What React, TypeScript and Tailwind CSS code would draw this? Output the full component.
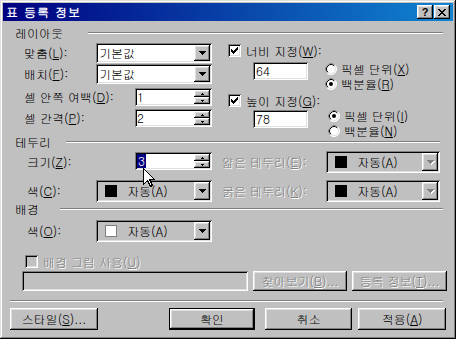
import React from "react";

const raised =
  "shadow-[inset_-1px_-1px_0_#000,inset_1px_1px_0_#fff,inset_-2px_-2px_0_#808080,inset_2px_2px_0_#dfdfdf]";
const defRaised =
  "shadow-[inset_0_0_0_1px_#000,inset_-2px_-2px_0_#000,inset_2px_2px_0_#fff,inset_-3px_-3px_0_#808080,inset_3px_3px_0_#dfdfdf]";
const sunken =
  "shadow-[inset_1px_1px_0_#808080,inset_-1px_-1px_0_#fff,inset_2px_2px_0_#000,inset_-2px_-2px_0_#dfdfdf]";
const dim = "text-[#808080] [text-shadow:1px_1px_0_#fff]";

function DropArrow({ disabled = false }: { disabled?: boolean }) {
  const rows = (c: string, o: number) => (
    <g fill={c}>
      <rect x={0 + o} y={0 + o} width={7} height={1} />
      <rect x={1 + o} y={1 + o} width={5} height={1} />
      <rect x={2 + o} y={2 + o} width={3} height={1} />
      <rect x={3 + o} y={3 + o} width={1} height={1} />
    </g>
  );
  return (
    <svg width="8" height="5" shapeRendering="crispEdges" className="ml-[1px]">
      {disabled && rows("#fff", 1)}
      {rows(disabled ? "#808080" : "#000", 0)}
    </svg>
  );
}

function Combo({ className, children, bg = "bg-white", disabled = false }: { className: string; children: React.ReactNode; bg?: string; disabled?: boolean }) {
  return (
    <div className={`flex p-[2px] ${bg} ${sunken} ${className}`}>
      <div className="flex-1 flex items-center">{children}</div>
      <div className={`w-[16px] bg-[#c0c0c0] flex items-center justify-center ${raised}`}>
        <DropArrow disabled={disabled} />
      </div>
    </div>
  );
}

function ColorCombo({ className, swatch = "black", disabled = false }: { className: string; swatch?: "black" | "white"; disabled?: boolean }) {
  return (
    <Combo className={className} bg="bg-[#c0c0c0]" disabled={disabled}>
      <span
        className={`ml-[7px] w-[12px] h-[12px] border ${swatch === "black" ? "bg-black border-black" : "bg-white border-[#808080]"}`}
      />
      <span className="ml-[10px]">자동(A)</span>
    </Combo>
  );
}

function TinyArrow({ up }: { up?: boolean }) {
  return (
    <svg width="3" height="2" shapeRendering="crispEdges">
      {up ? (
        <g fill="#000">
          <rect x="1" y="0" width="1" height="1" />
          <rect x="0" y="1" width="3" height="1" />
        </g>
      ) : (
        <g fill="#000">
          <rect x="0" y="0" width="3" height="1" />
          <rect x="1" y="1" width="1" height="1" />
        </g>
      )}
    </svg>
  );
}

function Spin({ className, children }: { className: string; children: React.ReactNode }) {
  return (
    <div className={`flex p-[2px] bg-white ${sunken} ${className}`}>
      <div className="flex-1 flex items-center">{children}</div>
      <div className="w-[16px] flex flex-col">
        <div className={`flex-1 bg-[#c0c0c0] flex items-center justify-center ${raised}`}>
          <TinyArrow up />
        </div>
        <div className={`flex-1 bg-[#c0c0c0] flex items-center justify-center ${raised}`}>
          <TinyArrow />
        </div>
      </div>
    </div>
  );
}

function Field({ className, children }: { className: string; children?: React.ReactNode }) {
  return <div className={`flex items-center pl-[3px] bg-white ${sunken} ${className}`}>{children}</div>;
}

function Check({ checked = false, disabled = false }: { checked?: boolean; disabled?: boolean }) {
  return (
    <div className={`w-[13px] h-[13px] shrink-0 relative ${disabled ? "bg-[#c0c0c0]" : "bg-white"} ${sunken}`}>
      {checked && (
        <svg width="7" height="7" shapeRendering="crispEdges" className="absolute left-[3px] top-[3px]">
          <g fill="#000">
            <rect x="0" y="2" width="1" height="3" />
            <rect x="1" y="3" width="1" height="3" />
            <rect x="2" y="4" width="1" height="3" />
            <rect x="3" y="3" width="1" height="3" />
            <rect x="4" y="2" width="1" height="3" />
            <rect x="5" y="1" width="1" height="3" />
            <rect x="6" y="0" width="1" height="3" />
          </g>
        </svg>
      )}
    </div>
  );
}

function Radio({ checked = false, children }: { checked?: boolean; children: React.ReactNode }) {
  return (
    <div className="h-[15px] flex items-center">
      <svg width="12" height="12" className="shrink-0">
        <circle cx="6" cy="6" r="5.5" fill="#fff" stroke="#fff" />
        <path d="M2.11 9.89 A5.5 5.5 0 0 1 9.89 2.11" fill="none" stroke="#808080" />
        <circle cx="6" cy="6" r="4.5" fill="none" stroke="#dfdfdf" />
        <path d="M2.82 9.18 A4.5 4.5 0 0 1 9.18 2.82" fill="none" stroke="#000" />
        {checked && <circle cx="6" cy="6" r="2" fill="#000" />}
      </svg>
      <span className="ml-[4px] whitespace-nowrap">{children}</span>
    </div>
  );
}

function Header({ label, lw, mr }: { label: string; lw: string; mr: string }) {
  return (
    <div className="flex items-center h-[14px]">
      <span className={`${lw} pl-[12px] whitespace-nowrap`}>{label}</span>
      <div className={`flex-1 h-0 border-t border-t-[#808080] border-b border-b-white ${mr}`} />
    </div>
  );
}

function Btn({ className, children, disabled = false, def = false }: { className: string; children: React.ReactNode; disabled?: boolean; def?: boolean }) {
  return (
    <div
      className={`flex items-center justify-center bg-[#c0c0c0] whitespace-nowrap ${def ? defRaised : raised} ${disabled ? dim : ""} ${className}`}
    >
      {children}
    </div>
  );
}

export default function App() {
  return (
    <div className="w-[456px] h-[339px] relative bg-[#c0c0c0] p-[3px] flex flex-col text-[12px] leading-none text-black font-['Gulim','Noto_Sans_CJK_KR',sans-serif] shadow-[inset_-1px_-1px_0_#000,inset_1px_1px_0_#dfdfdf,inset_-2px_-2px_0_#808080,inset_2px_2px_0_#fff]">
      {/* title bar */}
      <div className="h-[18px] shrink-0 flex items-center justify-between bg-[linear-gradient(to_right,#000080,#1084d0)]">
        <span className="pl-[3px] text-white font-bold text-[12px] tracking-[1px]">표 등록 정보</span>
        <div className="flex mr-[3px]">
          <Btn className="w-[16px] h-[14px] text-[11px] font-bold font-['Liberation_Sans',sans-serif]">?</Btn>
          <Btn className="ml-[1px] w-[16px] h-[14px]">
            <svg width="8" height="7" shapeRendering="crispEdges">
              <g fill="#000">
                <rect x="0" y="0" width="2" height="1" />
                <rect x="6" y="0" width="2" height="1" />
                <rect x="1" y="1" width="2" height="1" />
                <rect x="5" y="1" width="2" height="1" />
                <rect x="2" y="2" width="4" height="1" />
                <rect x="3" y="3" width="2" height="1" />
                <rect x="2" y="4" width="4" height="1" />
                <rect x="1" y="5" width="2" height="1" />
                <rect x="5" y="5" width="2" height="1" />
                <rect x="0" y="6" width="2" height="1" />
                <rect x="6" y="6" width="2" height="1" />
              </g>
            </svg>
          </Btn>
        </div>
      </div>

      {/* 레이아웃 */}
      <div className="mt-[5px]">
        <Header label="레이아웃" lw="w-[85px]" mr="mr-[10px]" />
      </div>
      <div className="mt-[3px] h-[92px] flex">
        <div className="ml-[21px] w-[188px] flex flex-col">
          <div className="h-[20px] flex items-center">
            <span className="w-[72px]">
              맞춤(<u>L</u>):
            </span>
            <Combo className="w-[116px] h-[20px]">
              <span className="ml-[1px]">기본값</span>
            </Combo>
          </div>
          <div className="mt-[1px] h-[20px] flex items-center">
            <span className="w-[72px]">
              배치(<u>F</u>):
            </span>
            <Combo className="w-[116px] h-[20px]">
              <span className="ml-[1px]">기본값</span>
            </Combo>
          </div>
          <div className="mt-[4px] h-[18px] flex items-center">
            <span className="w-[111px] whitespace-nowrap">
              셀 안쪽 여백(<u>D</u>):
            </span>
            <Spin className="w-[77px] h-[18px]">1</Spin>
          </div>
          <div className="mt-[3px] h-[18px] flex items-center">
            <span className="w-[111px]">
              셀 간격(<u>P</u>):
            </span>
            <Spin className="w-[77px] h-[18px]">2</Spin>
          </div>
        </div>

        <div className="ml-[16px] flex flex-col">
          <div className="mt-[1px] h-[13px] flex items-center">
            <Check checked />
            <span className="ml-[5px]">
              너비 지정(<u>W</u>):
            </span>
          </div>
          <div className="mt-[4px] flex">
            <Field className="mt-[1px] ml-[25px] w-[55px] h-[18px]">64</Field>
            <div className="ml-[17px] flex flex-col">
              <Radio>
                픽셀 단위(<u>X</u>)
              </Radio>
              <Radio checked>
                백분율(<u>R</u>)
              </Radio>
            </div>
          </div>
          <div className="mt-[3px] h-[13px] flex items-center">
            <Check checked />
            <span className="ml-[5px]">
              높이 지정(<u>G</u>):
            </span>
          </div>
          <div className="mt-[1px] flex">
            <Field className="mt-[2px] ml-[25px] w-[55px] h-[18px]">78</Field>
            <div className="ml-[20px] flex flex-col">
              <Radio checked>
                픽셀 단위(<u>I</u>)
              </Radio>
              <Radio>
                백분율(<u>N</u>)
              </Radio>
            </div>
          </div>
        </div>
      </div>

      {/* 테두리 */}
      <Header label="테두리" lw="w-[63px]" mr="mr-[13px]" />
      <div className="mt-[2px] h-[22px] flex">
        <div className="ml-[24px] w-[108px] flex items-center">
          크기(<u>Z</u>):
        </div>
        <Spin className="mt-[1px] w-[77px] h-[18px]">
          <span className="bg-[#000080] text-white px-[1px] py-[1px]">3</span>
        </Spin>
        <div className={`ml-[10px] w-[104px] flex items-center whitespace-nowrap ${dim}`}>
          얇은 테두리(<u>E</u>):
        </div>
        <ColorCombo className="w-[114px] h-[22px]" disabled />
      </div>
      <div className="mt-[7px] h-[22px] flex">
        <div className="ml-[24px] w-[69px] flex items-center">
          색(<u>C</u>):
        </div>
        <ColorCombo className="w-[116px] h-[22px]" />
        <div className={`ml-[10px] w-[104px] flex items-center whitespace-nowrap ${dim}`}>
          굵은 테두리(<u>K</u>):
        </div>
        <ColorCombo className="w-[114px] h-[22px]" disabled />
      </div>

      {/* 배경 */}
      <Header label="배경" lw="w-[57px]" mr="mr-[10px]" />
      <div className="mt-[4px] h-[22px] flex">
        <div className="ml-[24px] w-[69px] flex items-center">
          색(<u>O</u>):
        </div>
        <ColorCombo className="w-[116px] h-[22px]" swatch="white" />
      </div>
      <div className="mt-[13px] h-[13px] flex items-center ml-[22px]">
        <Check disabled />
        <span className={`ml-[5px] ${dim}`}>
          배경 그림 사용(<u>U</u>)
        </span>
      </div>
      <div className="mt-[3px] h-[20px] flex">
        <div className={`ml-[19px] w-[226px] h-[20px] bg-[#c0c0c0] ${sunken}`} />
        <Btn className="ml-[5px] w-[94px] h-[20px]" disabled>
          찾아보기(<u>B</u>)...
        </Btn>
        <Btn className="ml-[5px] w-[95px] h-[20px]" disabled>
          등록 정보(<u>T</u>)...
        </Btn>
      </div>

      <div className="mt-[9px] ml-[7px] mr-[10px] h-0 border-t border-t-[#808080] border-b border-b-white" />

      <div className="mt-[6px] h-[22px] flex">
        <Btn className="ml-[7px] w-[88px] h-[22px]">
          스타일(<u>S</u>)...
        </Btn>
        <Btn className="ml-[71px] w-[86px] h-[22px]" def>
          확인
        </Btn>
        <Btn className="ml-[10px] w-[87px] h-[22px]">취소</Btn>
        <Btn className="ml-[6px] w-[88px] h-[22px]">
          적용(<u>A</u>)
        </Btn>
      </div>

      {/* mouse pointer */}
      <svg width="12" height="19" className="absolute left-[143px] top-[168px]" shapeRendering="crispEdges">
        <path d="M0.5 0.5 V16.5 L4.5 12.5 L7.5 18.5 L9.5 17.5 L6.5 11.5 H11.5 Z" fill="#fff" stroke="#000" />
      </svg>
    </div>
  );
}
